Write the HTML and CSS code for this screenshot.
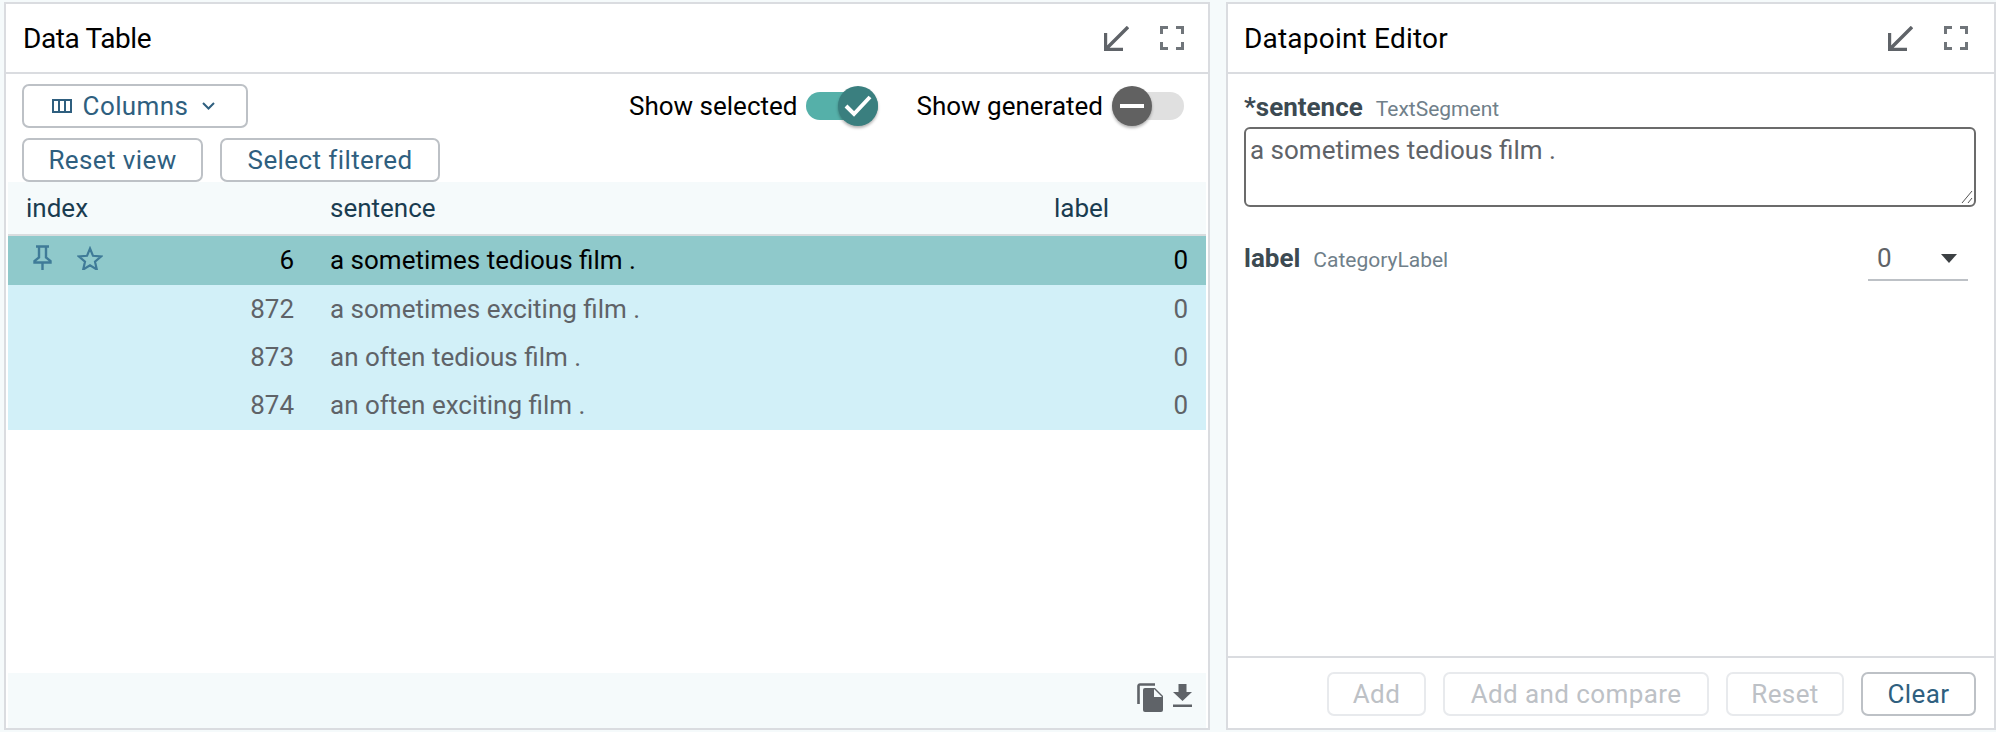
FILE: index.html
```html
<!DOCTYPE html>
<html lang="en">
<head>
    <meta charset="UTF-8">
    <title>Data Table</title>
    <link rel="stylesheet" href="styles.css">
</head>
<body>

<div class="page">
    <section class="panel panel-table">
        <header class="panel-header">
            <span class="panel-title">Data Table</span>
            <div class="panel-icons">
                <svg class="icon-min" viewBox="0 0 25 25"><path d="M24 1 3 22M1.500 7v16.500H19" fill="none" stroke="#5f6368" stroke-width="3.400"/></svg>
                <svg class="icon-max" viewBox="0 0 24 24"><path d="M1.500 8V1.500H8M16 1.500h6.500V8M1.500 16v6.500H8M16 22.500h6.500V16" fill="none" stroke="#70757a" stroke-width="3"/></svg>
            </div>
        </header>

        <div class="toolbar">
            <div class="toolbar-row">
                <button class="btn btn-columns">
                    <svg class="icon-columns" viewBox="0 0 20 14"><path d="M1 1h18v12H1zM7 1v12M13 1v12" fill="none" stroke="#2f5f7f" stroke-width="2"/></svg>
                    Columns
                    <svg class="icon-chevron" viewBox="0 0 13 8"><path d="M1 1l5.500 5.500L12 1" fill="none" stroke="#2f5f7f" stroke-width="2"/></svg>
                </button>
                <div class="toggles">
                    <label class="toggle-label">Show selected
                        <span class="toggle on">
                            <span class="knob">
                                <svg class="icon-check" viewBox="0 0 28 22"><path d="M2 11l8 8L26 2" fill="none" stroke="#fff" stroke-width="4"/></svg>
                            </span>
                        </span>
                    </label>
                    <label class="toggle-label">Show generated
                        <span class="toggle off">
                            <span class="knob">
                                <span class="minus"></span>
                            </span>
                        </span>
                    </label>
                </div>
            </div>
            <div class="toolbar-row toolbar-row-2">
                <button class="btn btn-reset">Reset view</button>
                <button class="btn btn-select">Select filtered</button>
            </div>
        </div>

        <div class="table">
            <div class="table-head">
                <span class="col-index">index</span>
                <span class="col-sentence">sentence</span>
                <span class="col-label">label</span>
            </div>
            <div class="row row-primary">
                <span class="row-icons">
                    <svg class="icon-pin" viewBox="0 0 19 25"><path d="M3 1.500h13M6 1.500v11L1.500 16v1.500h16V16L13 12.500v-11M9.500 17.500V25" fill="none" stroke="#3f7b98" stroke-width="2.400"/></svg>
                    <svg class="icon-star" viewBox="0 0 26 24"><path d="M13 2.500l3 7.300 8 .7-6 5.200 1.800 7.800-6.800-4.100-6.800 4.100L8 15.700l-6-5.200 8-.7z" fill="none" stroke="#3f7b98" stroke-width="2.200"/></svg>
                </span>
                <span class="cell-num">6</span>
                <span class="cell-text">a sometimes tedious film .</span>
                <span class="cell-val">0</span>
            </div>
            <div class="row">
                <span class="row-icons"></span>
                <span class="cell-num">872</span>
                <span class="cell-text">a sometimes exciting film .</span>
                <span class="cell-val">0</span>
            </div>
            <div class="row">
                <span class="row-icons"></span>
                <span class="cell-num">873</span>
                <span class="cell-text">an often tedious film .</span>
                <span class="cell-val">0</span>
            </div>
            <div class="row row-last">
                <span class="row-icons"></span>
                <span class="cell-num">874</span>
                <span class="cell-text">an often exciting film .</span>
                <span class="cell-val">0</span>
            </div>
        </div>

        <footer class="table-footer">
            <svg class="icon-copy" viewBox="0 0 26 29"><path d="M1.500 21V3A1.500 1.500 0 0 1 3 1.500h15" fill="none" stroke="#5f6368" stroke-width="2.600"/><path d="M8 5h10l8 8v14a2 2 0 0 1-2 2H8a2 2 0 0 1-2-2V7a2 2 0 0 1 2-2z" fill="#5f6368"/><path d="M17 6v8h8z" fill="#f5fafb"/></svg>
            <svg class="icon-download" viewBox="0 0 19 23"><path d="M5.500 0h8v8H19l-9.500 9L0 8h5.500zM0 20.500h19V23H0z" fill="#5f6368"/></svg>
        </footer>
    </section>

    <section class="panel panel-editor">
        <header class="panel-header">
            <span class="panel-title">Datapoint Editor</span>
            <div class="panel-icons">
                <svg class="icon-min" viewBox="0 0 25 25"><path d="M24 1 3 22M1.500 7v16.500H19" fill="none" stroke="#5f6368" stroke-width="3.400"/></svg>
                <svg class="icon-max" viewBox="0 0 24 24"><path d="M1.500 8V1.500H8M16 1.500h6.500V8M1.500 16v6.500H8M16 22.500h6.500V16" fill="none" stroke="#70757a" stroke-width="3"/></svg>
            </div>
        </header>

        <div class="editor-body">
            <div class="field-title">
                <span class="field-name">*sentence</span>
                <span class="field-type">TextSegment</span>
            </div>
            <div class="text-box">
                a sometimes tedious film .
                <svg class="grip" viewBox="0 0 12 14"><path d="M1 13 11 1M7 13l4-5" fill="none" stroke="#555" stroke-width="1"/></svg>
            </div>
            <div class="field-row">
                <div class="field-title">
                    <span class="field-name">label</span>
                    <span class="field-type">CategoryLabel</span>
                </div>
                <div class="select-box">
                    <span>0</span>
                    <span class="select-arrow"></span>
                </div>
            </div>
        </div>

        <footer class="editor-footer">
            <button class="btn btn-off btn-add">Add</button>
            <button class="btn btn-off btn-compare">Add and compare</button>
            <button class="btn btn-off btn-undo">Reset</button>
            <button class="btn btn-clear">Clear</button>
        </footer>
    </section>
</div>

</body>
</html>
```

FILE: styles.css
```css
html, body {
    margin: 0;
    height: 100%;
    overflow: hidden;
}
body {
    font-family: Roboto, Arial, sans-serif;
    background-color: #f5fafb;
    color: #000;
}
.page {
    display: flex;
    height: 732px;
    padding: 2px 0 2px 4px;
    box-sizing: border-box;
}
.panel {
    display: flex;
    flex-direction: column;
    background-color: white;
    border: 2px solid #dadce0;
    box-sizing: border-box;
}
.panel-table {
    width: 1206px;
    margin-right: 16px;
}
.panel-editor {
    flex: 1;
}
.panel-header {
    display: flex;
    justify-content: space-between;
    align-items: center;
    height: 68px;
    flex-shrink: 0;
    border-bottom: 2px solid #dadce0;
    box-sizing: content-box;
}
.panel-table .panel-header {
    padding: 0 24px 0 17px;
}
.panel-editor .panel-header {
    padding: 0 26px 0 16px;
}
.panel-title {
    font-size: 28px;
}
.panel-table .panel-title {
    letter-spacing: -0.4px;
}
.panel-editor .panel-title {
    letter-spacing: 0.2px;
}
.panel-icons {
    display: flex;
    align-items: center;
    gap: 31px;
}
.icon-min {
    width: 25px;
    height: 25px;
}
.icon-max {
    width: 24px;
    height: 24px;
}

/* toolbar */
.toolbar {
    padding: 10px 24px 0 16px;
    height: 108px;
    box-sizing: border-box;
    flex-shrink: 0;
}
.toolbar-row {
    display: flex;
    justify-content: space-between;
    align-items: center;
}
.toolbar-row-2 {
    justify-content: flex-start;
    gap: 17px;
    margin-top: 10px;
}
.btn {
    display: flex;
    align-items: center;
    justify-content: center;
    height: 44px;
    padding: 0;
    background-color: white;
    border: 2px solid #bdc1c6;
    border-radius: 7px;
    box-sizing: border-box;
    font-family: Roboto, Arial, sans-serif;
    font-size: 26px;
    letter-spacing: 0.4px;
    color: #2f5f7f;
}
.btn-columns {
    width: 226px;
    gap: 11px;
    padding-right: 3px;
}
.btn-reset {
    width: 181px;
}
.btn-select {
    width: 220px;
}
.icon-columns {
    width: 20px;
    height: 14px;
}
.icon-chevron {
    width: 13px;
    height: 8px;
    margin-left: 3px;
}
.toggles {
    display: flex;
    align-items: center;
    gap: 38px;
}
.toggle-label {
    display: flex;
    align-items: center;
    gap: 9px;
    font-size: 26px;
}
.toggle {
    position: relative;
    display: block;
    width: 72px;
    height: 28px;
    border-radius: 14px;
}
.toggle.on {
    background-color: #55b0a9;
}
.toggle.off {
    background-color: #e0e0e0;
}
.knob {
    position: absolute;
    top: -6px;
    display: flex;
    align-items: center;
    justify-content: center;
    width: 40px;
    height: 40px;
    border-radius: 50%;
    box-shadow: 0 2px 3px rgba(0, 0, 0, 0.3);
}
.toggle.on .knob {
    right: 0;
    background-color: #3a7f7f;
}
.toggle.off .knob {
    left: 0;
    background-color: #616161;
}
.icon-check {
    width: 28px;
    height: 22px;
}
.minus {
    width: 24px;
    height: 4px;
    background-color: white;
}

/* table */
.table {
    flex: 1;
    margin: 0 2px;
    font-size: 26px;
}
.table-head {
    display: flex;
    align-items: center;
    height: 52px;
    background-color: #f5fafb;
    border-bottom: 2px solid #d9dcde;
    box-sizing: content-box;
    color: #1a3c50;
}
.col-index {
    width: 322px;
    padding-left: 18px;
    box-sizing: border-box;
}
.col-sentence {
    width: 724px;
}
.row {
    display: flex;
    align-items: center;
    height: 48px;
    background-color: #d2f0f8;
    color: #5f6368;
}
.row-primary {
    height: 49px;
    padding-bottom: 2px;
    box-sizing: border-box;
    background-color: #8fc9cb;
    color: #000;
}
.row-last {
    height: 49px;
    padding-bottom: 1px;
    box-sizing: border-box;
}
.row-icons {
    display: flex;
    align-items: center;
    gap: 25px;
    width: 160px;
    padding-left: 25px;
    box-sizing: border-box;
    margin-top: -4px;
}
.icon-pin {
    width: 19px;
    height: 25px;
}
.icon-star {
    width: 26px;
    height: 24px;
}
.cell-num {
    width: 126px;
    text-align: right;
}
.cell-text {
    flex: 1;
    margin-left: 36px;
}
.cell-val {
    padding-right: 18px;
}
.table-footer {
    display: flex;
    justify-content: flex-end;
    align-items: flex-start;
    gap: 10px;
    height: 55px;
    flex-shrink: 0;
    margin: 0 2px;
    padding: 10px 14px 0 0;
    box-sizing: border-box;
    background-color: #f5fafb;
}
.icon-copy {
    width: 26px;
    height: 29px;
}
.icon-download {
    width: 19px;
    height: 23px;
    margin-top: 1px;
}

/* editor */
.editor-body {
    flex: 1;
    padding: 18px 18px 0 16px;
}
.field-title {
    display: flex;
    align-items: baseline;
    gap: 13px;
    line-height: 30px;
}
.field-name {
    font-size: 26px;
    font-weight: 700;
    color: #3c4a52;
}
.field-type {
    font-size: 21px;
    color: #70808a;
}
.text-box {
    position: relative;
    height: 80px;
    margin-top: 3px;
    padding: 6px 4px;
    border: 2px solid #6b6b6b;
    border-radius: 6px;
    box-sizing: border-box;
    font-size: 26px;
    color: #5f6368;
}
.grip {
    position: absolute;
    right: 1px;
    bottom: 1px;
    width: 12px;
    height: 14px;
}
.field-row {
    display: flex;
    justify-content: space-between;
    align-items: center;
    margin-top: 30px;
}
.select-box {
    display: flex;
    justify-content: space-between;
    align-items: center;
    width: 100px;
    height: 44px;
    margin-right: 8px;
    padding: 0 11px 0 9px;
    box-sizing: border-box;
    border-bottom: 2px solid #bdc1c6;
    font-size: 26px;
    color: #5f6368;
}
.select-arrow {
    width: 0;
    height: 0;
    border-left: 8.500px solid transparent;
    border-right: 8.500px solid transparent;
    border-top: 9px solid #3c4043;
}
.editor-footer {
    display: flex;
    justify-content: flex-end;
    gap: 17px;
    height: 72px;
    flex-shrink: 0;
    padding: 14px 18px 0 0;
    box-sizing: border-box;
    border-top: 2px solid #dadce0;
}
.btn-off {
    border-color: #e8eaed;
    color: #bdc1c6;
}
.btn-add {
    width: 99px;
}
.btn-compare {
    width: 266px;
}
.btn-undo {
    width: 118px;
}
.btn-clear {
    width: 115px;
}
```
